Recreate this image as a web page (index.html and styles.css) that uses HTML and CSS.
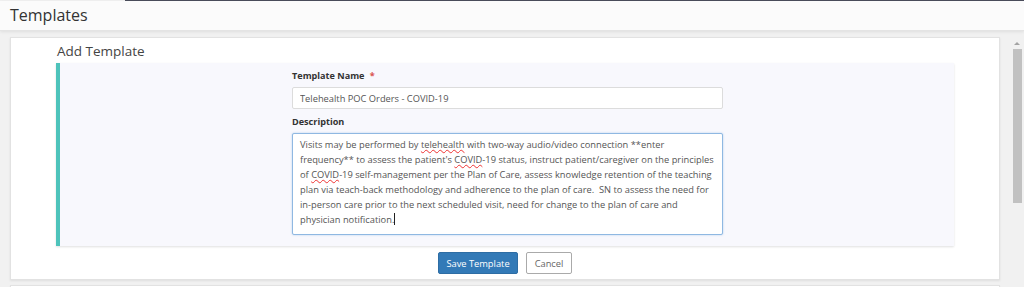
FILE: index.html
```html
<!DOCTYPE html>
<html lang="en">
<head>
    <meta charset="UTF-8">
    <meta name="viewport" content="width=device-width, initial-scale=1.0">
    <title>Templates</title>
    <link rel="stylesheet" href="styles.css">
</head>
<body>
    <div class="nav-strip"></div>
    <header class="page-header">
        <h1>Templates</h1>
    </header>

    <div class="main">
        <div class="content">
            <div class="card">
                <h2>Add Template</h2>
                <div class="panel">
                    <form class="template-form">
                        <label for="templateName">Template Name <span class="required">*</span></label>
                        <input type="text" id="templateName" value="Telehealth POC Orders - COVID-19">

                        <label>Description</label>
                        <div class="textarea">Visits may be performed by <span class="misspelled">telehealth</span> with two-way audio/video connection **enter<br>frequency** to assess the patient's <span class="misspelled">COVID</span>-19 status, instruct patient/caregiver on the principles<br>of <span class="misspelled">COVID</span>-19 self-management per the Plan of Care, assess knowledge retention of the teaching<br>plan via teach-back methodology and adherence to the plan of care.&nbsp; SN to assess the need for<br>in-person care prior to the next scheduled visit, need for change to the plan of care and<br>physician notification.<span class="caret"></span></div>
                    </form>
                </div>
                <div class="actions">
                    <button type="submit" class="btn-primary">Save Template</button>
                    <button type="button" class="btn-default">Cancel</button>
                </div>
            </div>
            <div class="card card-next"></div>
        </div>

        <!-- fake scrollbar of the content area -->
        <div class="scrollbar">
            <span class="scroll-arrow"></span>
            <span class="scroll-thumb"></span>
        </div>
    </div>
</body>
</html>
```

FILE: styles.css
```css
* {
    margin: 0;
    padding: 0;
    box-sizing: border-box;
}
body {
    font-family: 'Open Sans', sans-serif;
    color: #555;
    background: #f1f1f1;
    height: 287px;
    overflow: hidden;
}
.nav-strip {
    height: 1px;
    margin-left: 125px;
    background: #4a4d5c;
}
.page-header {
    height: 30px;
    background: #fbfbfb;
    border-bottom: 1px solid #e4e4e4;
    box-shadow: 0 1px 3px rgba(0, 0, 0, 0.08);
    padding-left: 10px;
    position: relative;
    z-index: 1;
}
.page-header h1 {
    font-size: 16px;
    font-weight: 400;
    color: #333;
    line-height: 29px;
}
.main {
    display: flex;
    height: 256px;
}
.content {
    flex: 1;
    padding: 6px 10px 0 10px;
}
.card {
    background: #fff;
    border: 1px solid #e2e2e2;
    box-shadow: 0 1px 2px rgba(0, 0, 0, 0.08);
    height: 243px;
    padding-top: 4px;
}
.card-next {
    margin-top: 5px;
    height: 3px;
    padding: 0;
}
.card h2 {
    font-size: 13.5px;
    font-weight: 400;
    color: #444;
    padding-left: 46px;
    line-height: 18px;
    margin-bottom: 3px;
}
.panel {
    margin: 0 45px;
    background: #f8f8fd;
    border-left: 4px solid #4ec3bb;
    box-shadow: 0 1px 2px rgba(0, 0, 0, 0.12);
    height: 183px;
    padding: 6px 0 0 232px;
}
.template-form {
    width: 431px;
    display: flex;
    flex-direction: column;
}
.template-form label {
    font-size: 9.1px;
    font-weight: 700;
    color: #333;
    line-height: 14px;
    margin-bottom: 4px;
}
.required {
    color: #d9534f;
    margin-left: 3px;
}
.template-form input {
    height: 22px;
    border: 1px solid #dcdcdc;
    border-radius: 2px;
    background: #fff;
    font-family: 'Open Sans', sans-serif;
    font-size: 9.3px;
    color: #555;
    padding: 0 7px;
    margin-bottom: 6px;
    outline: none;
}
.textarea {
    height: 102px;
    border: 1px solid #8fb8e2;
    border-radius: 2px;
    box-shadow: 0 0 2px rgba(102, 160, 220, 0.5);
    background: #fff;
    font-size: 9.3px;
    line-height: 15px;
    color: #555;
    padding: 3px 7px;
    white-space: nowrap;
}
.misspelled {
    text-decoration: underline wavy #e33;
    text-decoration-thickness: 1px;
    text-underline-offset: 1px;
}
.caret {
    display: inline-block;
    width: 1px;
    height: 12px;
    background: #222;
    vertical-align: -2px;
}
.actions {
    display: flex;
    justify-content: center;
    gap: 8px;
    margin-top: 6px;
}
.actions button {
    height: 22px;
    font-family: 'Open Sans', sans-serif;
    font-size: 9.3px;
    border-radius: 2px;
    cursor: pointer;
}
.btn-primary {
    width: 80px;
    background: #337ab7;
    border: 1px solid #2e6da4;
    color: #fff;
}
.btn-default {
    width: 46px;
    background: #fff;
    border: 1px solid #aaa;
    color: #666;
}
.scrollbar {
    width: 14px;
    background: #f1f1f1;
    display: flex;
    flex-direction: column;
    align-items: center;
    padding-top: 11px;
}
.scroll-arrow {
    width: 0;
    height: 0;
    border-left: 3px solid transparent;
    border-right: 3px solid transparent;
    border-bottom: 3px solid #a3a3a3;
}
.scroll-thumb {
    width: 9px;
    height: 154px;
    margin-top: 4px;
    background: #c1c1c1;
}
```
